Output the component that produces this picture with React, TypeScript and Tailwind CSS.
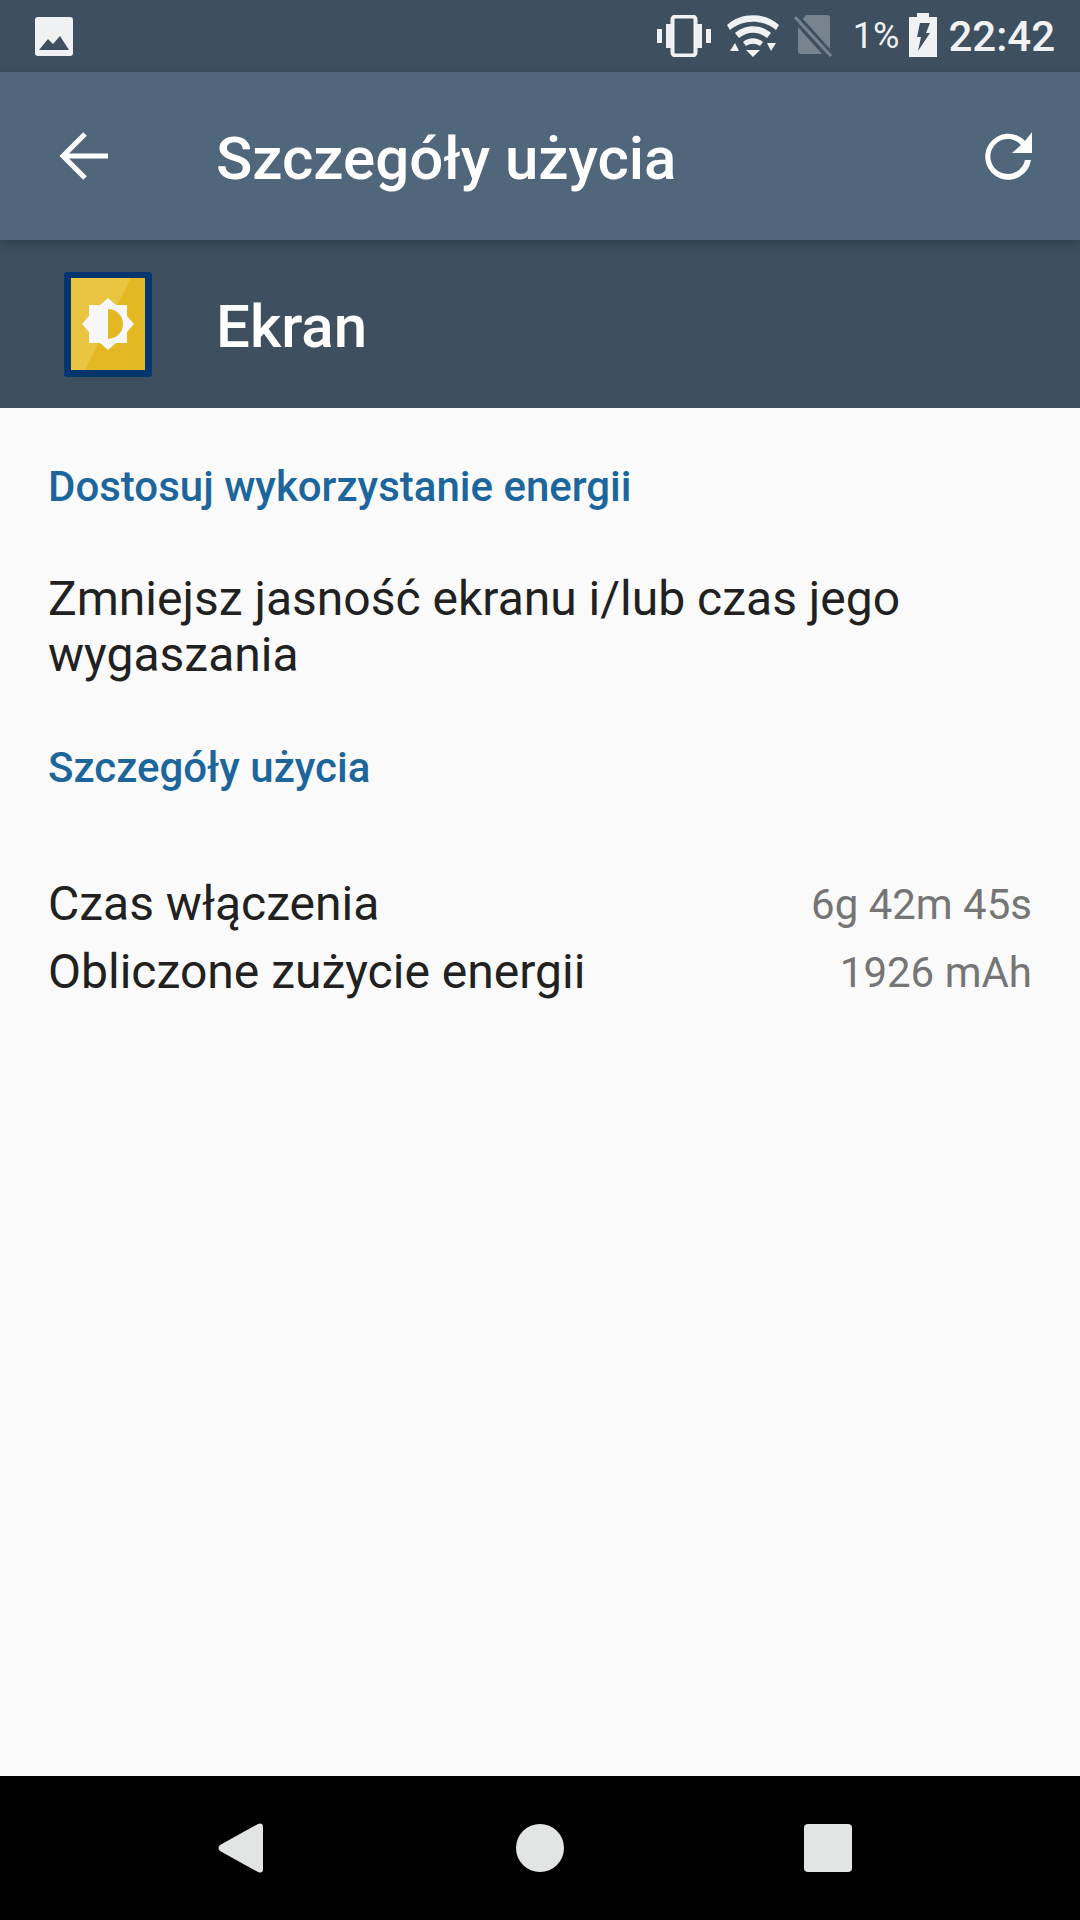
const font = "font-['Roboto','Liberation_Sans',sans-serif]"

function ImageIcon() {
  return (
    <svg viewBox="0 0 38 39" className="w-[38px] h-[39px]">
      <rect x="0" y="0" width="38" height="39" rx="3" fill="#eff1f3" />
      <path d="M4 33 L13 22 L18 27 L25 19 L34 33 Z" fill="#3e5060" />
    </svg>
  )
}

function VibrateIcon() {
  return (
    <svg viewBox="0 0 54 42" className="w-[54px] h-[42px]">
      <rect x="0" y="14" width="5" height="14" fill="#eff1f3" />
      <rect x="9" y="9" width="5" height="24" fill="#eff1f3" />
      <rect x="40" y="9" width="5" height="24" fill="#eff1f3" />
      <rect x="49" y="14" width="5" height="14" fill="#eff1f3" />
      <rect x="15.5" y="1.5" width="23" height="39" rx="3" fill="none" stroke="#eff1f3" strokeWidth="4" />
    </svg>
  )
}

function WifiIcon() {
  return (
    <svg viewBox="0 0 52 42" className="w-[52px] h-[42px]">
      <path d="M0 10 C14 -3 38 -3 52 10 L49 15 C36 4 16 4 3 15 Z" fill="#eff1f3" />
      <path d="M8 18 C18 9 34 9 44 18 L40 23 C31 16 21 16 12 23 Z" fill="#eff1f3" />
      <path d="M16 27 C22 22 30 22 36 27 L33 31 C28 28 24 28 19 31 Z" fill="#eff1f3" />
      <path d="M19 35 H33 L26 42 Z" fill="#eff1f3" />
      <path d="M8 28 L3 36 H12 Z" fill="#eff1f3" />
      <path d="M40 28 H49 L44 36 Z" fill="#eff1f3" />
    </svg>
  )
}

function NoSimIcon() {
  return (
    <svg viewBox="0 0 40 42" className="w-[40px] h-[42px]">
      <path d="M12 0 H33 Q36 0 36 3 V34 L9 4 Z M4 12 L28 39 H7 Q4 39 4 36 Z" fill="#77848f" />
      <path d="M1 2 L37 41" stroke="#77848f" strokeWidth="3" />
    </svg>
  )
}

function BatteryIcon() {
  return (
    <svg viewBox="0 0 28 44" className="w-[28px] h-[44px]">
      <path d="M8 0 H20 V4 H28 V44 H0 V4 H8 Z" fill="#eff1f3" />
      <path d="M11 10 H21 L17 20 H21 L9 38 L12 24 H8 Z" fill="#3e5060" />
    </svg>
  )
}

function ScreenIcon() {
  return (
    <svg viewBox="0 0 88 105" className="w-[88px] h-[105px]">
      <rect x="0" y="0" width="88" height="105" rx="3" fill="#07366f" />
      <rect x="7" y="6" width="74" height="92" fill="#e3b823" />
      <path d="M7 6 H67 L21 98 H7 Z" fill="#e8c440" />
      <path d="M44 26 L52 33 H63 V44 L70 52 L63 60 V71 H52 L44 78 L36 71 H25 V60 L18 52 L25 44 V33 H36 Z" fill="#f7f7f7" />
      <path d="M44 37 A15 15 0 0 1 44 67 Z" fill="#e3b823" />
    </svg>
  )
}

function DetailRow({ label, value }: { label: string; value: string }) {
  return (
    <div className="flex justify-between items-center h-[68px]">
      <span className="text-[48px] text-[#212121]">{label}</span>
      <span className="text-[42px] text-[#757575]">{value}</span>
    </div>
  )
}

export default function App() {
  return (
    <div className={`w-[1080px] h-[1920px] flex flex-col overflow-hidden bg-[#fafafa] ${font}`}>
      <div className="h-[72px] bg-[#3e5060] flex items-center pl-[35px] pr-[25px] text-[#eff1f3]">
        <ImageIcon />
        <div className="ml-auto flex items-center">
          <VibrateIcon />
          <div className="ml-[16px]"><WifiIcon /></div>
          <div className="ml-[15px]"><NoSimIcon /></div>
          <span className="ml-[19px] text-[36px]">1%</span>
          <div className="ml-[10px] -mt-[2px]"><BatteryIcon /></div>
          <span className="ml-[11px] text-[42px] font-medium">22:42</span>
        </div>
      </div>

      <div className="h-[168px] bg-[#50667a] flex items-center text-white relative z-10 shadow-[0_4px_10px_rgba(0,0,0,0.25)]">
        <svg viewBox="0 0 48 48" className="w-[48px] h-[48px] ml-[60px]" fill="none" stroke="#fff" strokeWidth="5">
          <path d="M48 24 H4 M25 2 L3 24 L25 46" />
        </svg>
        <span className="ml-[108px] pt-[5px] text-[60px] font-medium">Szczegóły użycia</span>
        <svg viewBox="0 0 48 48" className="w-[48px] h-[48px] ml-auto mr-[48px]">
          <path d="M41 9 A23 23 0 1 0 47 28 H41 A17.500 17.500 0 1 1 37 13 L28 21 H48 V0 Z" fill="#fff" />
        </svg>
      </div>

      <div className="h-[168px] bg-[#3e5060] flex items-center text-white">
        <div className="ml-[64px]"><ScreenIcon /></div>
        <span className="ml-[64px] pt-[5px] text-[60px] font-medium">Ekran</span>
      </div>

      <div className="flex-1 px-[48px] pt-[54px]">
        <div className="text-[42px] font-medium text-[#1c669c] leading-[50px]">Dostosuj wykorzystanie energii</div>
        <div className="mt-[59px] text-[48px] text-[#212121] leading-[56px]">
          Zmniejsz jasność ekranu i/lub czas jego wygaszania
        </div>
        <div className="mt-[60px] text-[42px] font-medium text-[#1c669c] leading-[50px]">Szczegóły użycia</div>
        <div className="mt-[77px] flex flex-col">
          <DetailRow label="Czas włączenia" value="6g 42m 45s" />
          <DetailRow label="Obliczone zużycie energii" value="1926 mAh" />
        </div>
      </div>

      <div className="h-[144px] bg-black flex items-center shrink-0">
        <svg viewBox="0 0 46 50" className="w-[46px] h-[50px] ml-[218px]">
          <path d="M2 22 L40 1 Q45 -1 45 4 V46 Q45 51 40 49 L2 28 Q-1 25 2 22 Z" fill="#e3e5e4" />
        </svg>
        <div className="ml-[252px] w-[48px] h-[48px] rounded-full bg-[#e3e5e4]" />
        <div className="ml-[240px] w-[48px] h-[48px] rounded-[4px] bg-[#e3e5e4]" />
      </div>
    </div>
  )
}
